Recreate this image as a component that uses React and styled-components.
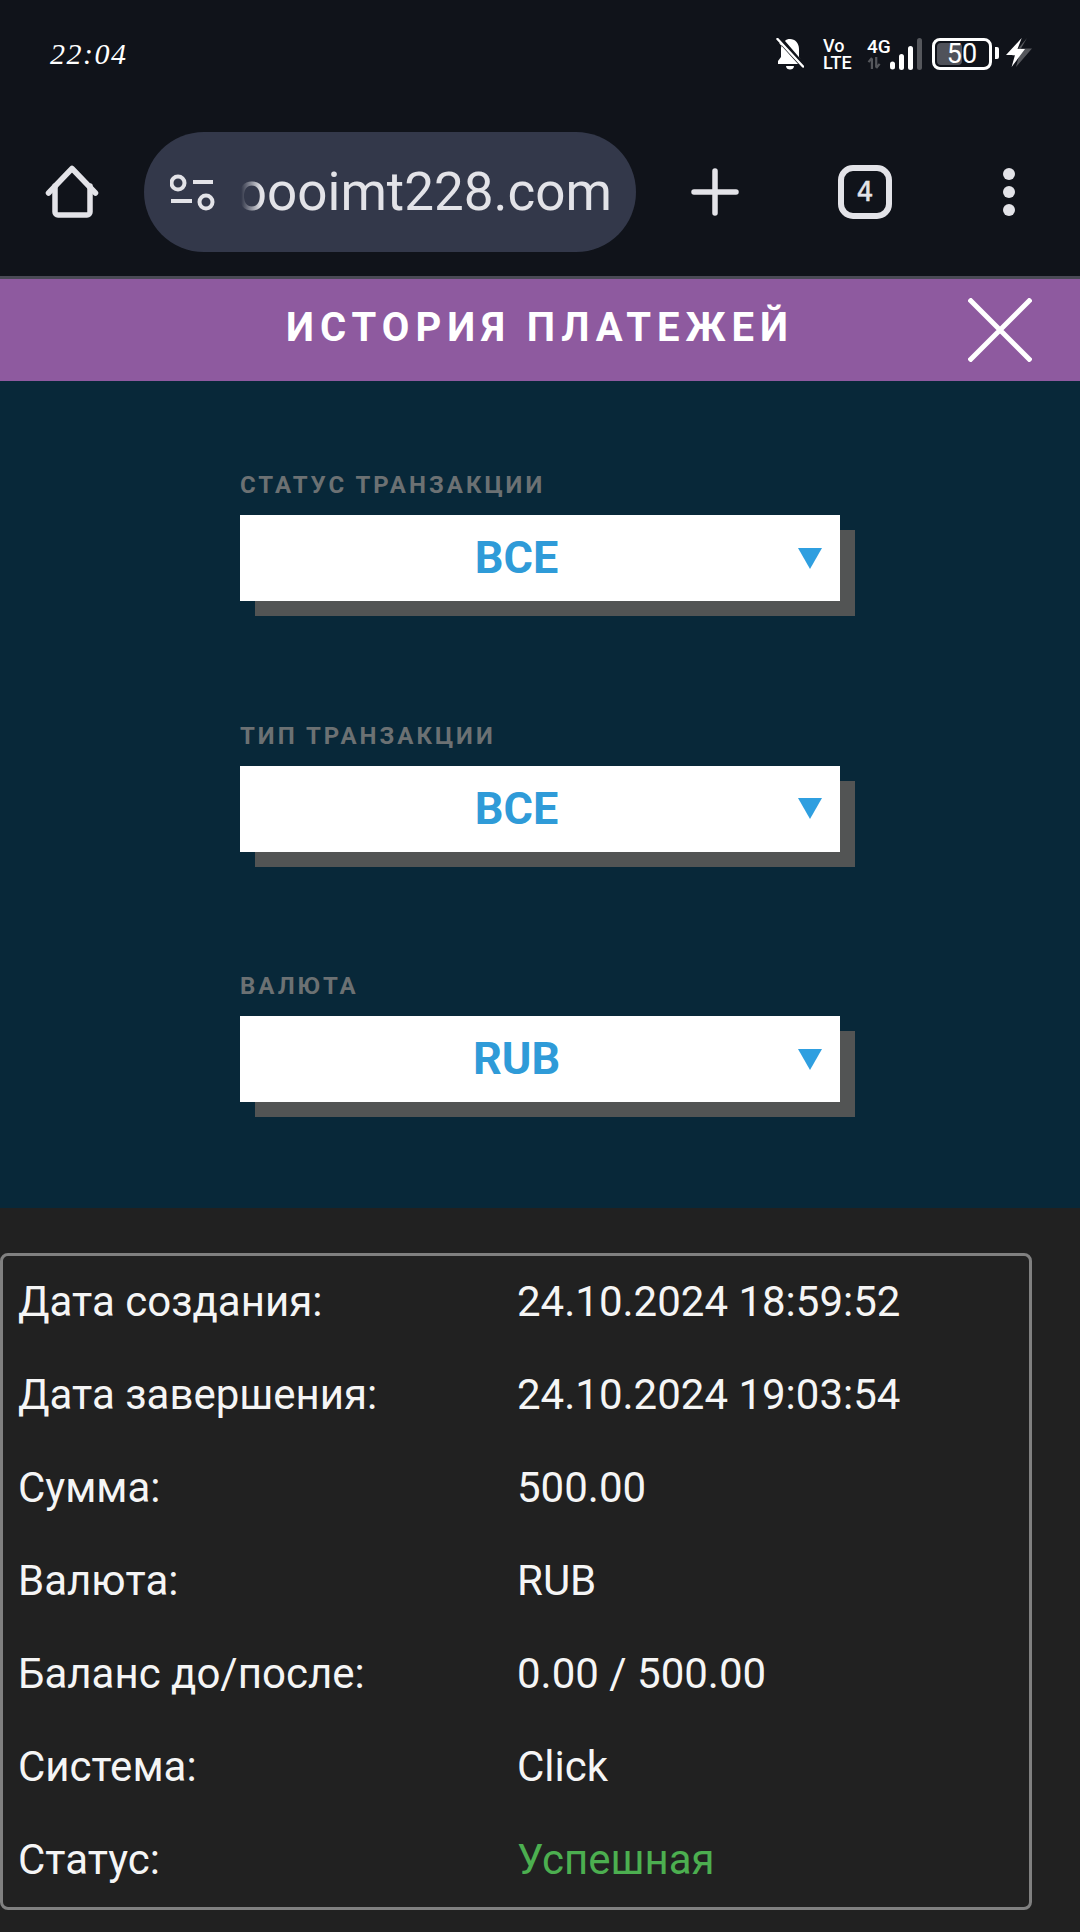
import React from 'react';
import styled, { createGlobalStyle } from 'styled-components';

const GlobalStyle = createGlobalStyle`
  html, body {
    margin: 0;
    padding: 0;
    background: #212121;
  }
  * {
    box-sizing: border-box;
  }
`;

const Page = styled.div`
  width: 1080px;
  height: 1932px;
  overflow: hidden;
  display: flex;
  flex-direction: column;
  background: #212121;
  font-family: Roboto, "Liberation Sans", sans-serif;
`;

/**
 * PHONE CHROME
 */
const Chrome = styled.div`
  background: #10131a;
  border-bottom: 3px solid #4a4a56;
`;

const StatusBar = styled.div`
  height: 132px;
  padding: 38px 48px 0 50px;
  display: flex;
  justify-content: space-between;
  align-items: flex-start;
  color: #fff;
`;

const Clock = styled.div`
  font-family: "Liberation Serif", serif;
  font-style: italic;
  font-size: 30px;
  line-height: 32px;
  letter-spacing: 1.5px;
`;

const StatusIcons = styled.div`
  display: flex;
  align-items: flex-start;
  height: 32px;
`;

const StatusSvg = styled.svg`
  display: block;
  flex: none;
  margin-left: ${({ $gap }) => $gap || 0}px;
`;

const VoLte = styled.div`
  margin: -1px 0 0 19px;
  width: 30px;
  font-size: 18px;
  font-weight: 500;
  line-height: 17px;
  text-align: left;
`;

const Network = styled.div`
  margin: -1px 0 0 14px;
  width: 23px;
  font-size: 19px;
  font-weight: 500;
  line-height: 20px;
  white-space: nowrap;
`;

const Battery = styled.div`
  position: relative;
  margin-left: 10px;
  width: 60px;
  height: 32px;
  border: 3px solid #fff;
  border-radius: 8px;
  display: flex;
  align-items: center;
  justify-content: center;
  font-size: 27px;
  line-height: 26px;
`;

const BatteryFill = styled.div`
  position: absolute;
  left: 2px;
  top: 2px;
  bottom: 2px;
  border-radius: 4px;
  background: #50525a;
`;

const BatteryLevel = styled.span`
  position: relative;
`;

const BatteryNub = styled.div`
  margin: 9px 0 0 3px;
  width: 4px;
  height: 12px;
  border-radius: 0 2px 2px 0;
  background: #fff;
`;

const Toolbar = styled.div`
  height: 144px;
  padding: 0 0 24px 45px;
  display: flex;
  align-items: center;
  color: #e3e3e8;
`;

const ToolIcon = styled.svg`
  display: block;
  flex: none;
  margin-left: ${({ $gap }) => $gap || 0}px;
`;

const TuneIcon = styled.svg`
  display: block;
  flex: none;
`;

const UrlPill = styled.div`
  margin-left: 45px;
  width: 492px;
  height: 120px;
  border-radius: 60px;
  background: #33384a;
  padding: 0 24px 0 26px;
  display: flex;
  align-items: center;
`;

const UrlClip = styled.div`
  margin-left: 25px;
  flex: 1;
  min-width: 0;
  overflow: hidden;
  display: flex;
  justify-content: flex-end;
  font-size: 53px;
  line-height: 64px;
  white-space: nowrap;
  -webkit-mask-image: linear-gradient(to right, transparent 0, #000 20px);
  mask-image: linear-gradient(to right, transparent 0, #000 20px);
`;

const TabCounter = styled.div`
  margin-left: 99px;
  width: 54px;
  height: 54px;
  flex: none;
  border: 6px solid #e3e3e8;
  border-radius: 15px;
  display: flex;
  align-items: center;
  justify-content: center;
  font-family: "DejaVu Sans", sans-serif;
  font-size: 26px;
  -webkit-text-stroke: 0.6px #e3e3e8;
`;

/**
 * TITLE BAR
 */
const TitleBar = styled.div`
  height: 102px;
  padding-right: 48px;
  background: #8e5a9f;
  display: grid;
  grid-template-columns: 1fr auto 1fr;
  align-items: center;
`;

const Title = styled.h1`
  grid-column: 2;
  margin: -4px 0 0 48px;
  color: #fff;
  font-size: 40px;
  font-weight: 700;
  letter-spacing: 6px;
  line-height: 48px;
  white-space: nowrap;
`;

const CloseIcon = styled.svg`
  grid-column: 3;
  justify-self: end;
  display: block;
`;

/**
 * FILTERS
 */
const Filters = styled.div`
  height: 827px;
  padding: 89px 0 0 240px;
  background: #082839;
  display: flex;
  flex-direction: column;
  gap: 119.5px;
`;

const Field = styled.div`
  width: 600px;
`;

const FieldLabel = styled.div`
  margin-bottom: 15px;
  color: #6c7173;
  font-size: 24px;
  font-weight: 700;
  letter-spacing: 3px;
  line-height: 30px;
`;

const Select = styled.div`
  height: 86px;
  padding-right: 18px;
  background: #fff;
  box-shadow: 15px 15px 0 #525454;
  display: flex;
  align-items: center;
`;

const SelectValue = styled.div`
  flex: 1;
  padding-right: 5px;
  text-align: center;
  color: #2f9bd8;
  font-size: 45px;
  font-weight: 700;
  line-height: 50px;
`;

const SelectArrow = styled.div`
  width: 0;
  height: 0;
  border-left: 12px solid transparent;
  border-right: 12px solid transparent;
  border-top: 21px solid #2f9fe0;
`;

/**
 * PAYMENT CARD
 */
const Results = styled.div`
  flex: 1;
  padding: 45px 48px 0 0;
`;

const Card = styled.div`
  height: 657px;
  border: 3px solid #808080;
  border-radius: 8px;
`;

const Row = styled.div`
  height: 93px;
  padding-left: 15px;
  margin-top: -1px;
  margin-bottom: 1px;
  display: grid;
  grid-template-columns: 499px 1fr;
  align-items: center;
  color: #f5f5f5;
  font-size: 42px;
  line-height: 50px;
`;

const RowValue = styled.div`
  color: ${({ $color }) => $color || 'inherit'};
`;

const rows = [
  ['Дата создания:', '24.10.2024 18:59:52'],
  ['Дата завершения:', '24.10.2024 19:03:54'],
  ['Сумма:', '500.00'],
  ['Валюта:', 'RUB'],
  ['Баланс до/после:', '0.00 / 500.00'],
  ['Система:', 'Click'],
  ['Статус:', 'Успешная', '#4caf50'],
];

const filters = [
  ['СТАТУС ТРАНЗАКЦИИ', 'ВСЕ'],
  ['ТИП ТРАНЗАКЦИИ', 'ВСЕ'],
  ['ВАЛЮТА', 'RUB'],
];

const App = () => (
  <Page>
    <GlobalStyle />
    <Chrome>
      <StatusBar>
        <Clock>22:04</Clock>
        <StatusIcons>
          <StatusSvg width="28" height="32" viewBox="0 0 28 32" fill="#fff">
            <path d="M3 5 L22 26 H2 V23 L5 19 V11 C5 9 5.5 7 6.5 6 Z" />
            <path d="M9 3 C10 1.5 12 1 14 1 C19 1 23 5 23 11 V19 L25 21.5 Z" />
            <path d="M10 28 H18 C18 30.5 16 31.5 14 31.5 C12 31.5 10 30.5 10 28 Z" />
            <path d="M1.5 1 L27 28.5" stroke="#fff" strokeWidth="2.4" strokeLinecap="round" />
          </StatusSvg>
          <VoLte>Vo<br />LTE</VoLte>
          <Network>
            4G
            <StatusSvg width="15" height="12" viewBox="0 0 16 14" fill="none" stroke="#55575c" strokeWidth="2.6">
              <path d="M5 14 V2 M1 6 L5 1 M10 0 V12 M14 8 L10 13" />
            </StatusSvg>
          </Network>
          <StatusSvg width="32" height="32" viewBox="0 0 32 32" fill="#fff">
            <rect x="0" y="23.5" width="5" height="8" rx="2.5" />
            <rect x="9" y="16" width="5" height="16" rx="2.5" />
            <rect x="18" y="8" width="5" height="24" rx="2.5" />
            <rect x="27" y="0" width="5" height="32" rx="2.5" fill="#55575c" />
          </StatusSvg>
          <Battery>
            <BatteryFill style={{ width: '25px' }} />
            <BatteryLevel>50</BatteryLevel>
          </Battery>
          <BatteryNub />
          <StatusSvg $gap={7} width="26" height="30" viewBox="0 0 26 30">
            <path d="M21 0 L15 10.6 H26 L10 29 L13 18 H6 Z" fill="#55575c" />
            <path d="M15.7 0 L0 17 H9 L5.6 29 L19 11 H11.5 Z" fill="#fff" />
          </StatusSvg>
        </StatusIcons>
      </StatusBar>
      <Toolbar>
        <ToolIcon width="54" height="54" viewBox="0 0 54 54" fill="none" stroke="currentColor" strokeWidth="5.5" strokeLinecap="round" strokeLinejoin="round">
          <path d="M3.5 28 L27 3.5 L50.5 28" />
          <path d="M10 21 V47 A3 3 0 0 0 13 50 H42 A3 3 0 0 0 45 47 V21" />
        </ToolIcon>
        <UrlPill>
          <TuneIcon width="46" height="40" viewBox="0 0 46 40" fill="none" stroke="currentColor" strokeWidth="4">
            <circle cx="8" cy="11" r="6.5" />
            <path d="M23 10 H43" />
            <path d="M1 29 H22" />
            <circle cx="36" cy="30" r="6.5" />
          </TuneIcon>
          <UrlClip><span>oooimt228.com</span></UrlClip>
        </UrlPill>
        <ToolIcon $gap={55} width="48" height="48" viewBox="0 0 48 48" fill="none" stroke="currentColor" strokeWidth="5.5" strokeLinecap="round">
          <path d="M3 24 H45 M24 3 V45" />
        </ToolIcon>
        <TabCounter>4</TabCounter>
        <ToolIcon $gap={111} width="12" height="48" viewBox="0 0 12 48" fill="currentColor">
          <circle cx="6" cy="6" r="6" />
          <circle cx="6" cy="24" r="6" />
          <circle cx="6" cy="42" r="6" />
        </ToolIcon>
      </Toolbar>
    </Chrome>
    <TitleBar>
      <Title>ИСТОРИЯ ПЛАТЕЖЕЙ</Title>
      <CloseIcon width="64" height="64" viewBox="0 0 64 64" stroke="#fff" strokeWidth="5">
        <path d="M1 1 L63 63 M63 1 L1 63" />
      </CloseIcon>
    </TitleBar>
    <Filters>
      {filters.map(([label, value]) => (
        <Field key={label}>
          <FieldLabel>{label}</FieldLabel>
          <Select>
            <SelectValue>{value}</SelectValue>
            <SelectArrow />
          </Select>
        </Field>
      ))}
    </Filters>
    <Results>
      <Card>
        {rows.map(([label, value, color]) => (
          <Row key={label}>
            <div>{label}</div>
            <RowValue $color={color}>{value}</RowValue>
          </Row>
        ))}
      </Card>
    </Results>
  </Page>
);

export default App;
